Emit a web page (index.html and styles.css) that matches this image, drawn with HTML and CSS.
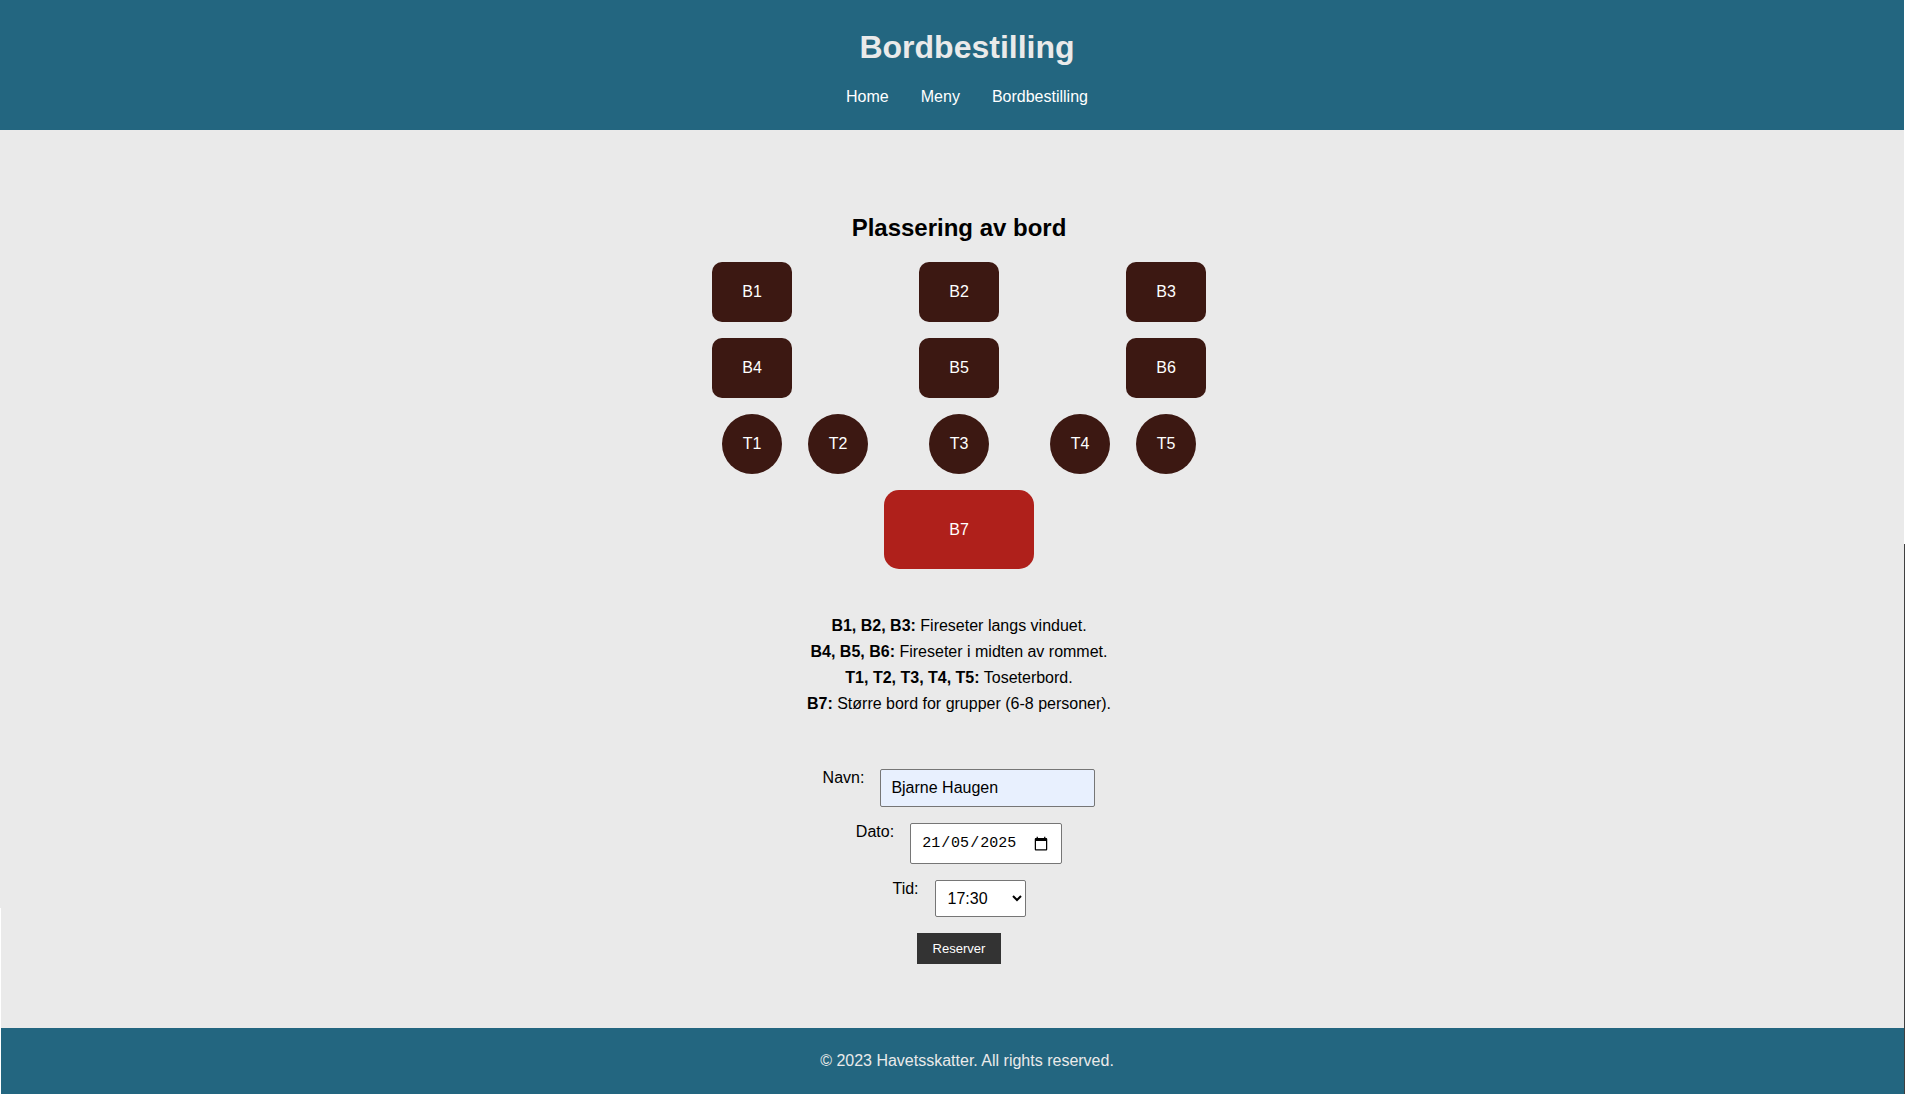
FILE: index.html
```html
<!DOCTYPE html>
<html lang="no">
<head>
  <meta charset="UTF-8">
  <meta name="viewport" content="width=device-width, initial-scale=1.0">
  <title>Bordbestilling</title>
  <link rel="stylesheet" href="styles.css">
</head>
<body>
  <header class="site-header">
    <h1 class="site-title">Bordbestilling</h1>
    <nav class="site-nav">
      <a class="nav-link" href="#home">Home</a>
      <a class="nav-link" href="#meny">Meny</a>
      <a class="nav-link" href="#bordbestilling">Bordbestilling</a>
    </nav>
  </header>

  <main class="content">
    <h2 class="section-title">Plassering av bord</h2>

    <div class="floor-plan">
      <div class="seat">B1</div>
      <div class="seat seat-middle">B2</div>
      <div class="seat seat-last">B3</div>
      <div class="seat">B4</div>
      <div class="seat seat-middle">B5</div>
      <div class="seat seat-last">B6</div>
      <div class="seat seat-round">T1</div>
      <div class="seat seat-round">T2</div>
      <div class="seat seat-round">T3</div>
      <div class="seat seat-round">T4</div>
      <div class="seat seat-round">T5</div>
      <div class="seat seat-large seat-middle">B7</div>
    </div>

    <div class="legend">
      <p><strong>B1, B2, B3:</strong> Fireseter langs vinduet.</p>
      <p><strong>B4, B5, B6:</strong> Fireseter i midten av rommet.</p>
      <p><strong>T1, T2, T3, T4, T5:</strong> Toseterbord.</p>
      <p><strong>B7:</strong> Større bord for grupper (6-8 personer).</p>
    </div>

    <form class="booking">
      <div class="field">
        <label for="navn">Navn:</label>
        <input class="control control-name" type="text" id="navn" name="navn" value="Bjarne Haugen">
      </div>
      <div class="field">
        <label for="dato">Dato:</label>
        <input class="control control-date" type="date" id="dato" name="dato" value="2025-05-21">
      </div>
      <div class="field">
        <label for="tid">Tid:</label>
        <select class="control control-time" id="tid" name="tid">
          <option>17:30</option>
          <option>18:00</option>
          <option>18:30</option>
          <option>19:00</option>
        </select>
      </div>
      <button class="submit" type="submit">Reserver</button>
    </form>
  </main>

  <footer class="site-footer">
    <p>© 2023 Havetsskatter. All rights reserved.</p>
  </footer>
</body>
</html>
```

FILE: styles.css
```css
* {
  box-sizing: border-box;
}

body {
  position: relative;
  display: flex;
  flex-direction: column;
  min-height: 100vh;
  margin: 0;
  background: #eaeaea;
  color: #000;
  font-family: "Liberation Sans", Arial, sans-serif;
  font-size: 16px;
}

/* Thin window edges along both sides of the page */
body::before,
body::after {
  content: "";
  position: absolute;
  bottom: 0;
  width: 1px;
}

body::before {
  left: 0;
  height: 17%;
  background: #fff;
}

body::after {
  top: 0;
  right: 0;
  background: linear-gradient(#fff 49.7%, #404040 49.7%);
}

h1,
h2,
p {
  margin: 0;
}

.site-header,
.site-footer {
  padding-left: 29px;
  background: #236680;
  color: #eaeaea;
  text-align: center;
}

.site-header {
  padding-top: 28px;
  padding-bottom: 22px;
}

.site-title {
  font-size: 32px;
  line-height: 38px;
}

.site-nav {
  display: flex;
  justify-content: center;
  gap: 32px;
  margin-top: 20px;
  line-height: 22px;
}

.nav-link {
  color: #fff;
  text-decoration: none;
}

.content {
  display: flex;
  flex: 1;
  flex-direction: column;
  align-items: center;
  padding: 84px 0 64px 13px;
}

.section-title {
  font-size: 24px;
  line-height: 28px;
}

.floor-plan {
  display: grid;
  grid-template-columns: 80px 60px 150px 60px 80px;
  gap: 16px;
  justify-items: center;
  margin-top: 20px;
}

.seat {
  display: flex;
  grid-column: 1;
  align-items: center;
  justify-content: center;
  width: 80px;
  height: 60px;
  border-radius: 10px;
  background: #3c1812;
  color: #fff;
}

.seat-middle {
  grid-column: 3;
}

.seat-last {
  grid-column: 5;
}

.seat-round {
  grid-column: auto;
  width: 60px;
  border-radius: 50%;
}

.seat-large {
  width: 150px;
  height: 79px;
  border-radius: 15px;
  background: #af201b;
}

.legend {
  margin-top: 44px;
  line-height: 26px;
  text-align: center;
}

.booking {
  display: flex;
  flex-direction: column;
  align-items: center;
  gap: 16px;
  margin-top: 52px;
}

.field {
  display: flex;
  align-items: flex-start;
  gap: 16px;
}

.control {
  margin: 0;
  padding: 8px 10px;
  border: 1px solid #767676;
  border-radius: 2px;
  background: #fff;
  color: #000;
  font-family: inherit;
  font-size: 16px;
}

.control-name {
  width: 215px;
  height: 38px;
  background: #e8f0fe;
}

.control-date {
  width: 152px;
  height: 41px;
  font-family: "Liberation Mono", monospace;
  font-size: 15px;
}

/* Day before month: the two fields trade places around the first slash */
.control-date::-webkit-datetime-edit-month-field {
  position: relative;
  left: calc(3ch + 2px);
}

.control-date::-webkit-datetime-edit-day-field {
  position: relative;
  right: calc(3ch + 2px);
}

.control-date::-webkit-calendar-picker-indicator {
  width: 16px;
  height: 16px;
}

.control-time {
  width: 91px;
  height: 37px;
  padding: 8px;
}

.submit {
  padding: 8px 16px;
  border: 0;
  background: #333;
  color: #fff;
  font-family: inherit;
  font-size: 13px;
}

.site-footer {
  padding-top: 20px;
  padding-bottom: 20px;
  line-height: 26px;
}
```
